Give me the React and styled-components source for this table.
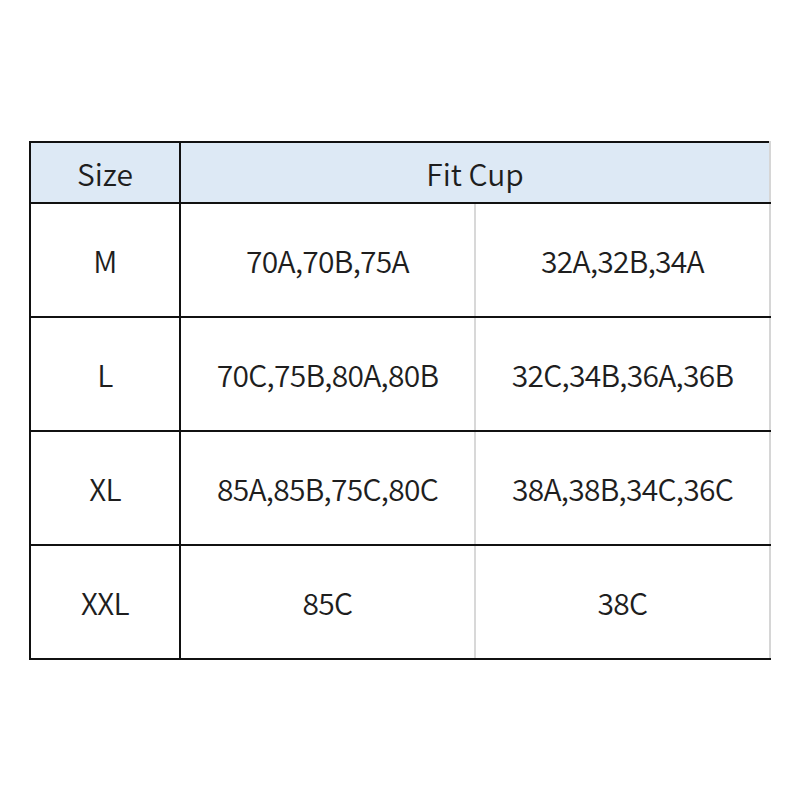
import React from 'react';
import styled, { createGlobalStyle } from 'styled-components';

const GlobalStyle = createGlobalStyle`
  body {
    margin: 0;
    background: #ffffff;
    font-family: "Noto Sans CJK SC", "Liberation Sans", sans-serif;
  }
`;

const Page = styled.div`
  width: 800px;
  height: 800px;
  padding: 141px 0 0 29px;
  box-sizing: border-box;
`;

const Table = styled.table`
  border-collapse: collapse;
  table-layout: fixed;
  width: 740px;
  color: #1e1e1e;
`;

const HeadCell = styled.th`
  height: 59px;
  padding: 0;
  background: #dde9f5;
  font-weight: 350;
  font-size: 30px;
  line-height: 1;
  text-align: center;
  border-top: 2px solid #111;
  border-bottom: 2px solid #111;
  border-left: 2px solid #111;
  border-right: ${p => (p.$last ? '2px solid #d6d6d6' : 'none')};
`;

const Cell = styled.td`
  height: 112px;
  padding: 0;
  font-size: 30px;
  font-weight: 350;
  line-height: 1;
  letter-spacing: -0.7px;
  text-align: center;
  border-bottom: 2px solid #111;
  border-left: 2px solid ${p => (p.$soft ? '#d8d8d8' : '#111')};
  border-right: ${p => (p.$last ? '2px solid #d6d6d6' : 'none')};
`;

const rows = [
  { size: 'M', metric: '70A,70B,75A', us: '32A,32B,34A' },
  { size: 'L', metric: '70C,75B,80A,80B', us: '32C,34B,36A,36B' },
  { size: 'XL', metric: '85A,85B,75C,80C', us: '38A,38B,34C,36C' },
  { size: 'XXL', metric: '85C', us: '38C' },
];

export default function App() {
  return (
    <Page>
      <GlobalStyle />
      <Table>
        <colgroup>
          <col style={{ width: 150 }} />
          <col style={{ width: 295 }} />
          <col style={{ width: 295 }} />
        </colgroup>
        <thead>
          <tr>
            <HeadCell>Size</HeadCell>
            <HeadCell colSpan={2} $last>Fit Cup</HeadCell>
          </tr>
        </thead>
        <tbody>
          {rows.map(r => (
            <tr key={r.size}>
              <Cell>{r.size}</Cell>
              <Cell>{r.metric}</Cell>
              <Cell $soft $last>{r.us}</Cell>
            </tr>
          ))}
        </tbody>
      </Table>
    </Page>
  );
}
